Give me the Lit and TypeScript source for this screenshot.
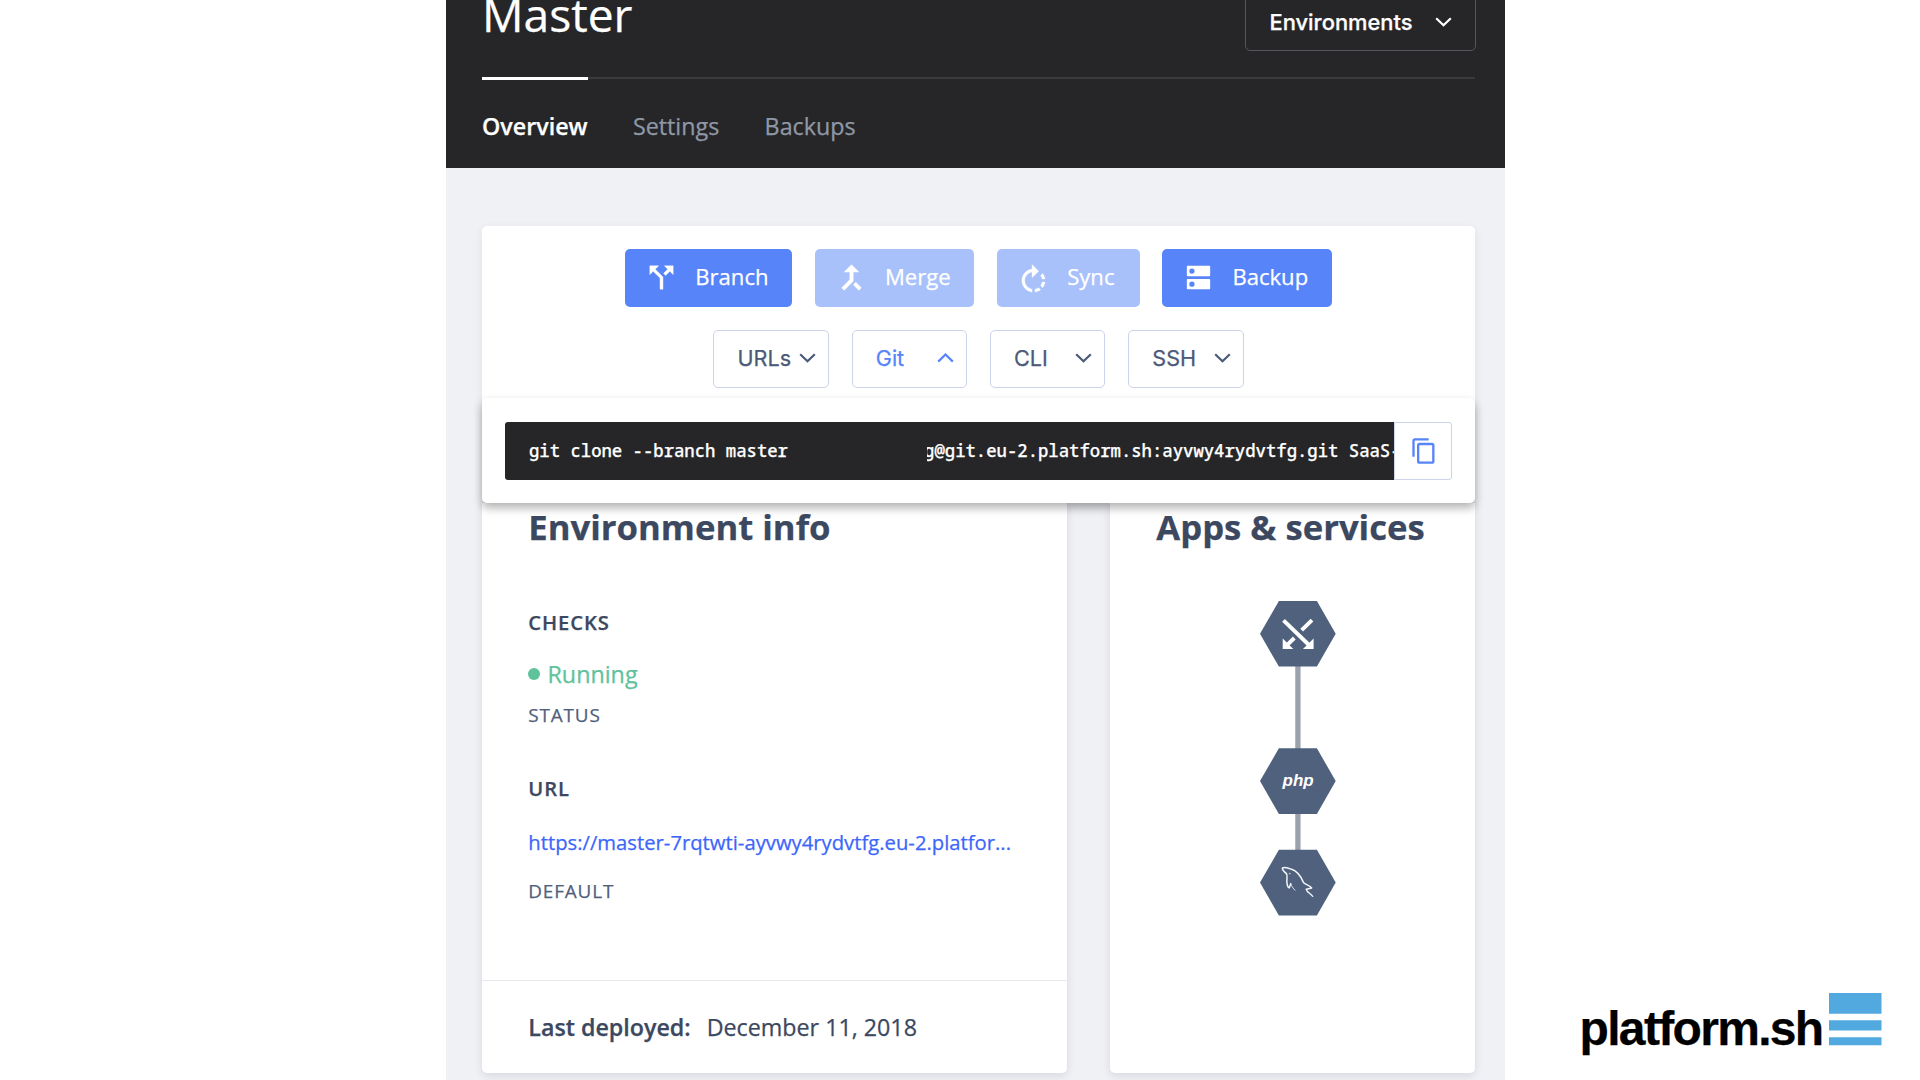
import { LitElement, html, css, svg } from 'lit';
import { customElement, state } from 'lit/decorators.js';
import { classMap } from 'lit/directives/class-map.js';

const chevronDown = html`<svg class="chevron" viewBox="0 0 17 10"><path d="M1.2 1.2 8.5 8.3 15.8 1.2" /></svg>`;
const chevronUp = html`<svg class="chevron" viewBox="0 0 17 10"><path d="M1.2 8.6 8.5 1.5 15.8 8.6" /></svg>`;

const actions = [
  {
    id: 'branch',
    label: 'Branch',
    disabled: false,
    icon: svg`<path stroke="#fff" stroke-width=".3" d="M14 4l2.29 2.29-2.88 2.88 1.42 1.42 2.88-2.88L20 10V4zm-4 0H4v6l2.29-2.29 4.71 4.7V20h2v-8.41l-5.29-5.3z" />`,
  },
  {
    id: 'merge',
    label: 'Merge',
    disabled: true,
    icon: svg`<path stroke="#fff" stroke-width=".7" d="M17 20.41L18.41 19 15 15.59 13.59 17 17 20.41zM7.5 8H11v5.59L5.59 19 7 20.41l6-6V8h3.5L12 3.5 7.5 8z" />`,
  },
  {
    id: 'sync',
    label: 'Sync',
    disabled: true,
    icon: svg`<path stroke="#fff" stroke-width=".2" transform="translate(0 2.1)" d="M15.55 5.55L11 1v3.07C7.06 4.56 4 7.92 4 12s3.05 7.44 7 7.93v-2.02c-2.84-.48-5-2.94-5-5.91s2.16-5.43 5-5.91V10l4.55-4.45zM19.93 11c-.17-1.39-.72-2.73-1.62-3.89l-1.42 1.42c.54.75.88 1.6 1.02 2.47h2.02zM13 17.9v2.02c1.39-.17 2.74-.71 3.9-1.61l-1.44-1.44c-.75.54-1.59.89-2.46 1.03zm3.89-2.42l1.42 1.41c.9-1.16 1.45-2.5 1.62-3.89h-2.02c-.14.87-.48 1.72-1.02 2.48z" />`,
  },
  {
    id: 'backup',
    label: 'Backup',
    disabled: false,
    icon: svg`<path fill-rule="evenodd" d="M4.5 4h15a.5.5 0 0 1 .5.5v6.1a.5.5 0 0 1-.5.5h-15a.5.5 0 0 1-.5-.5V4.5a.5.5 0 0 1 .5-.5zm3 1.75a1.8 1.8 0 1 0 0 3.6a1.8 1.8 0 0 0 0-3.6zM4.5 13h15a.5.5 0 0 1 .5.5v6.1a.5.5 0 0 1-.5.5h-15a.5.5 0 0 1-.5-.5v-6.1a.5.5 0 0 1 .5-.5zm3 1.75a1.8 1.8 0 1 0 0 3.6a1.8 1.8 0 0 0 0-3.6z" />`,
  },
];

const menus = ['URLs', 'Git', 'CLI', 'SSH'];

@customElement('app-root')
export class AppRoot extends LitElement {
  @state() private openMenu = 'Git';

  static styles = css`
    :host {
      display: block;
      width: 1920px;
      height: 1080px;
      overflow: hidden;
      background: #fff;
      font-family: 'Open Sans', 'Noto Sans', sans-serif;
      color: #3c4860;
      -webkit-text-stroke: 0.25px;
    }
    * {
      box-sizing: border-box;
    }
    h1, h2, h3, p {
      margin: 0;
    }
    button {
      font: inherit;
      color: inherit;
      margin: 0;
      padding: 0;
      border: 0;
      background: none;
    }
    .page {
      display: flex;
      height: 1080px;
      padding-left: 445.7px;
    }
    .console {
      width: 1059.6px;
      height: 1080px;
      display: flex;
      flex-direction: column;
      background: #f0f1f5;
      overflow: hidden;
    }
    header {
      flex: none;
      height: 168.3px;
      padding: 0 30.3px 0 36.3px;
      background: #262628;
    }
    .title-row {
      height: 77px;
      display: flex;
      justify-content: space-between;
      align-items: flex-start;
    }
    h1 {
      font-size: 46.2px;
      font-weight: 400;
      line-height: 30px;
      color: #fff;
    }
    .environments {
      display: flex;
      align-items: center;
      justify-content: space-between;
      width: 230.5px;
      height: 58px;
      margin: -7px -1px 0 0;
      padding: 0 23px 1px 23px;
      border: 1.5px solid #56555e;
      border-radius: 5px;
      font: 500 21.9px Inter, sans-serif;
      color: #fff;
    }
    .chevron {
      width: 17px;
      height: 10px;
      fill: none;
      stroke: currentColor;
      stroke-width: 2.2px;
    }
    nav {
      display: flex;
      gap: 45.3px;
      border-top: 2px solid #3a3a3c;
    }
    .tab {
      margin-top: -2px;
      padding-top: 31px;
      border-top: 3px solid transparent;
      font-size: 23.3px;
      line-height: 30px;
      color: #8f98a6;
    }
    .tab.active {
      border-color: #fff;
      color: #fff;
      font-weight: 600;
    }
    main {
      padding: 57.7px 30.3px 0 36.3px;
    }
    .toolbar {
      background: #fff;
      border-radius: 5px;
      box-shadow: 0 3px 9px rgba(40, 50, 70, 0.09);
    }
    .controls {
      display: flex;
      flex-direction: column;
      gap: 23.3px;
      height: 172.5px;
      padding-top: 23.1px;
    }
    .row {
      display: flex;
      justify-content: center;
      gap: 22.8px;
    }
    .action {
      display: flex;
      align-items: center;
      gap: 16.2px;
      height: 57.7px;
      padding: 0 23.6px 0 18.9px;
      border-radius: 5px;
      background: #5784f8;
      color: #fff;
      font-size: 22.1px;
    }
    .action.disabled {
      background: #a9c1fb;
    }
    .action svg {
      width: 35px;
      height: 35px;
      fill: #fff;
    }
    .action.sync {
      padding-right: 25px;
    }
    .action span {
      padding-bottom: 3px;
    }
    .select {
      display: flex;
      align-items: center;
      justify-content: space-between;
      width: 115.5px;
      height: 57.7px;
      padding: 0 12px 1.4px 23.2px;
      border: 1.5px solid #cdd3e8;
      border-radius: 5px;
      font: 400 21.6px Inter, sans-serif;
      color: #4b5a78;
    }
    .select.open {
      color: #5784f8;
    }
    .flyout {
      position: relative;
      z-index: 1;
      display: flex;
      height: 104.5px;
      padding: 23.8px 23.2px 23px 23px;
      background: #fff;
      border-radius: 5px;
      box-shadow: 0 5px 10px rgba(0, 0, 0, 0.3);
    }
    .command {
      flex: 1;
      min-width: 0;
      display: flex;
      padding-left: 24px;
      overflow: hidden;
      background: #262628;
      border-radius: 3px 0 0 3px;
      font: 500 17.28px/58px 'Noto Sans Mono', 'DejaVu Sans Mono', monospace;
      color: #fff;
      white-space: pre;
    }
    .remote {
      margin-left: 139.4px;
      overflow: hidden;
      text-indent: -3.3px;
    }
    .copy {
      display: flex;
      flex: none;
      align-items: center;
      justify-content: center;
      width: 57.5px;
      padding-left: 1px;
      border: 1.5px solid #cdd3e8;
      border-radius: 0 3px 3px 0;
    }
    .copy svg {
      width: 28px;
      height: 28px;
      fill: #5784f8;
    }
    .columns {
      display: grid;
      grid-template-columns: 584.8px 365px;
      justify-content: space-between;
      height: 570.3px;
    }
    .card {
      display: flex;
      flex-direction: column;
      background: #fff;
      border-radius: 0 0 5px 5px;
      box-shadow: 0 3px 9px rgba(40, 50, 70, 0.12);
    }
    .card-body {
      flex: 1;
      padding: 0 46px 0 46.3px;
    }
    h2 {
      font-size: 34.7px;
      font-weight: 700;
      line-height: 48px;
      white-space: nowrap;
    }
    h3 {
      font-size: 20.2px;
      font-weight: 600;
      line-height: 28px;
      letter-spacing: 0.9px;
    }
    .checks {
      margin-top: 57px;
    }
    .url {
      margin-top: 45.6px;
    }
    .state {
      display: flex;
      align-items: center;
      gap: 7.2px;
      margin-top: 22.5px;
      font-size: 23.3px;
      line-height: 32px;
      color: #5ec29b;
    }
    .dot {
      width: 12px;
      height: 12px;
      border-radius: 50%;
      background: #5ec29b;
    }
    .caption {
      margin-top: 12px;
      font-size: 18.9px;
      line-height: 26px;
      letter-spacing: 0.85px;
      color: #515f7d;
    }
    .link {
      margin-top: 25px;
      font-size: 20.25px;
      line-height: 30px;
      white-space: nowrap;
      color: #3c66fa;
    }
    .link + .caption {
      margin-top: 21.4px;
    }
    footer {
      display: flex;
      align-items: center;
      gap: 16px;
      height: 93.6px;
      padding: 0 46.3px;
      border-top: 1.3px solid #e8e9ed;
      font-size: 23.25px;
    }
    footer b {
      font-weight: 600;
    }
    .services {
      display: block;
      width: 76px;
      height: 315px;
      margin: 50px 0 0 103.5px;
    }
    .php {
      font: italic 700 17px 'Liberation Sans', Arial, sans-serif;
      fill: #fff;
    }
    .brand {
      display: flex;
      gap: 7px;
      margin: 992.7px 0 0 74.3px;
    }
    .brand-name {
      margin-top: 10.6px;
      font: 700 48px/52px 'Liberation Sans', Arial, sans-serif;
      letter-spacing: -1.68px;
      color: #000;
    }
    .brand-bars {
      width: 53px;
      height: 53px;
      fill: #52a9e0;
    }
  `;

  private renderServices() {
    const hex = 'M0 32.8 18.9 0h38L75.7 32.8 56.9 65.6h-38z';
    return html`<svg class="services" viewBox="0 0 76 315">
      <path d="M37.9 60v235" stroke="#9ba2ac" stroke-width="5.3" />
      <g fill="#4f617d">
        <path d=${hex} />
        <path d=${hex} transform="translate(0 147.3)" />
        <path d=${hex} transform="translate(0 248.8)" />
      </g>
      <g fill="none" stroke="#fff" stroke-width="3.9">
        <path d="M23.5 19.3 49.5 44.5" />
        <path d="M52 19.2 41.7 29.2" />
        <path d="M34.3 37 26.5 44.7" />
      </g>
      <path fill="#fff" d="M53.6 37.6v10.5H43zM22.7 37.6v10.5h10.6z" />
      <text class="php" x="22.6" y="184.5">php</text>
      <g transform="translate(5.7 249) scale(.3333)" fill="none" stroke="#f4f6fa" stroke-linejoin="round" stroke-linecap="round">
        <path stroke-width="4.5" d="M62 71C56 66 50 61 50 55 55 49 68 54 78 58 96 64 105 79 112 95 115 104 129 103 138 114L122 118" />
        <path stroke-width="4" d="M122 118C123 127 132 128 141 139" />
        <path stroke-width="4.5" d="M62 71C68 79 61 88 64 100 65 108 68 113 71 113L75 101" />
        <path stroke-width="2.5" d="M75 101C78 109 82 115 88 121" />
        <circle cx="72" cy="71" r="1.3" stroke-width="1.5" />
      </g>
    </svg>`;
  }

  render() {
    return html`<div class="page">
      <div class="console">
        <header>
          <div class="title-row">
            <h1>Master</h1>
            <button class="environments">Environments ${chevronDown}</button>
          </div>
          <nav>
            <span class="tab active">Overview</span>
            <span class="tab">Settings</span>
            <span class="tab">Backups</span>
          </nav>
        </header>
        <main>
          <section class="toolbar">
            <div class="controls">
              <div class="row">
                ${actions.map(
                  (a) => html`<button class=${classMap({ action: true, disabled: a.disabled, [a.id]: true })}>
                    <svg viewBox="0 0 24 24">${a.icon}</svg><span>${a.label}</span>
                  </button>`,
                )}
              </div>
              <div class="row">
                ${menus.map(
                  (m) => html`<button
                    class=${classMap({ select: true, open: m === this.openMenu })}
                    @click=${() => (this.openMenu = m)}
                  >${m}${m === this.openMenu ? chevronUp : chevronDown}</button>`,
                )}
              </div>
            </div>
            <div class="flyout">
              <div class="command"><span>git clone --branch master</span><span class="remote">g@git.eu-2.platform.sh:ayvwy4rydvtfg.git SaaS-</span></div>
              <button class="copy">
                <svg viewBox="0 0 24 24"><path d="M16 1H4c-1.1 0-2 .9-2 2v14h2V3h12V1zm3 4H8c-1.1 0-2 .9-2 2v14c0 1.1.9 2 2 2h11c1.1 0 2-.9 2-2V7c0-1.1-.9-2-2-2zm0 16H8V7h11v14z" /></svg>
              </button>
            </div>
          </section>
          <div class="columns">
            <section class="card">
              <div class="card-body">
                <h2>Environment info</h2>
                <h3 class="checks">CHECKS</h3>
                <p class="state"><span class="dot"></span>Running</p>
                <p class="caption">STATUS</p>
                <h3 class="url">URL</h3>
                <p class="link">https://master-7rqtwti-ayvwy4rydvtfg.eu-2.platfor...</p>
                <p class="caption">DEFAULT</p>
              </div>
              <footer><b>Last deployed:</b><span>December 11, 2018</span></footer>
            </section>
            <section class="card">
              <div class="card-body">
                <h2>Apps &amp; services</h2>
                ${this.renderServices()}
              </div>
            </section>
          </div>
        </main>
      </div>
      <div class="brand">
        <span class="brand-name">platform.sh</span>
        <svg class="brand-bars" viewBox="0 0 53 53"><path d="M0 0h52.5v20.8H0zM0 27.3h52.5v10.3H0zM0 44.3h52.5v8H0z" /></svg>
      </div>
    </div>`;
  }
}
